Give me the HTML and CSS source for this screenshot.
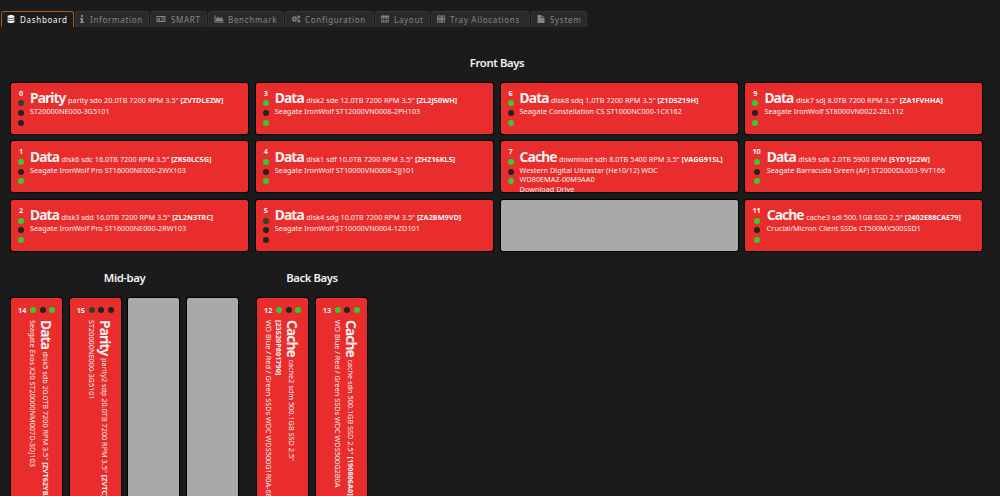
FILE: index.html
```
<!DOCTYPE html>
<html lang="en">
<head>
    <meta charset="UTF-8">
    <meta name="viewport" content="width=device-width, initial-scale=1.0">
    <title>Disk Location</title>
    <link rel="stylesheet" href="styles.css">
</head>
<body>

<nav class="tabs">
    <a class="tab tab-dashboard active"><svg viewBox="0 0 16 16"><path d="M1 3c0-4 14-4 14 0v1c0 3-14 3-14 0zM1 6c2 2 12 2 14 0v2c0 3-14 3-14 0zM1 10c2 2 12 2 14 0v3c0 4-14 4-14 0z"/></svg><span>Dashboard</span></a>
    <a class="tab tab-information"><svg viewBox="0 0 16 16"><path d="M6 0h4v4H6zM4 6h6v7h2v3H4v-3h2V9H4z"/></svg><span>Information</span></a>
    <a class="tab tab-smart"><svg class="wide" viewBox="0 0 18 16"><path fill-rule="evenodd" d="M0 2h18v12H0zM2 4v8h14V4z"/><path d="M3 11c0-3 5-3 5 0zM4 6h3v3H4zM10 5h5v2h-5zM10 8h5v1h-5zM10 10h5v1h-5z"/></svg><span>SMART</span></a>
    <a class="tab tab-benchmark"><svg class="wide" viewBox="0 0 18 16"><path d="M0 1h2v12h16v2H0zM3 12V8l4-5 3 4 4-3 4 8z"/></svg><span>Benchmark</span></a>
    <a class="tab tab-configuration"><svg class="wide" viewBox="0 0 18 16"><circle cx="6" cy="8" r="3.2" fill="none" stroke="currentColor" stroke-width="2.8"/><circle cx="6" cy="8" r="4.9" fill="none" stroke="currentColor" stroke-width="2" stroke-dasharray="2 1.85"/><circle cx="14.5" cy="4" r="2" fill="none" stroke="currentColor" stroke-width="2.4"/><circle cx="14.5" cy="12" r="2" fill="none" stroke="currentColor" stroke-width="2.4"/></svg><span>Configuration</span></a>
    <a class="tab tab-layout"><svg viewBox="0 0 16 16"><path fill-rule="evenodd" d="M0 1h16v14H0zM1 5v2h4V5zM6 5v2h4V5zM11 5v2h4V5zM1 8v2h4V8zM6 8v2h4V8zM11 8v2h4V8zM1 11v2h4v-2zM6 11v2h4v-2zM11 11v2h4v-2z"/></svg><span>Layout</span></a>
    <a class="tab tab-tray"><svg viewBox="0 0 16 16"><path fill-rule="evenodd" d="M0 1h16v4H0zM0 6h16v4H0zM0 11h16v4H0zM2 3v1h6V3zM2 8v1h6V8zM2 13v1h6v-1zM12 2v2h2V2zM12 7v2h2V7zM12 12v2h2v-2z"/></svg><span>Tray Allocations</span></a>
    <a class="tab tab-system"><svg viewBox="0 0 16 16"><path d="M1 0h7v6h7v10H1zM9 0l6 5H9z"/></svg><span>System</span></a>
</nav>

<section class="front">
    <h2>Front Bays</h2>
    <div class="grid">
        <div class="bay"><div class="leds"><b>0</b><i class="idle"></i><i></i><i></i></div><p><strong>Parity</strong> parity sdo 20.0TB 7200 RPM 3.5" <b>[ZVTDLEZW]</b><br>ST20000NE000-3G5101</p></div>
        <div class="bay"><div class="leds"><b>1</b><i class="on"></i><i></i><i class="on"></i></div><p><strong>Data</strong> disk6 sdc 16.0TB 7200 RPM 3.5" <b>[ZR50LC5G]</b><br>Seagate IronWolf Pro ST16000NE000-2WX103</p></div>
        <div class="bay"><div class="leds"><b>2</b><i class="on"></i><i></i><i class="on"></i></div><p><strong>Data</strong> disk3 sdd 16.0TB 7200 RPM 3.5" <b>[ZL2N3TRC]</b><br>Seagate IronWolf Pro ST16000NE000-2RW103</p></div>

        <div class="bay"><div class="leds"><b>3</b><i class="on"></i><i></i><i class="on"></i></div><p><strong>Data</strong> disk2 sde 12.0TB 7200 RPM 3.5" <b>[ZL2J50WH]</b><br>Seagate IronWolf ST12000VN0008-2PH103</p></div>
        <div class="bay"><div class="leds"><b>4</b><i class="on"></i><i></i><i class="on"></i></div><p><strong>Data</strong> disk1 sdf 10.0TB 7200 RPM 3.5" <b>[ZHZ16KL5]</b><br>Seagate IronWolf ST10000VN0008-2JJ101</p></div>
        <div class="bay"><div class="leds"><b>5</b><i class="idle"></i><i></i><i></i></div><p><strong>Data</strong> disk4 sdg 10.0TB 7200 RPM 3.5" <b>[ZA2BM9VD]</b><br>Seagate IronWolf ST10000VN0004-1ZD101</p></div>

        <div class="bay"><div class="leds"><b>6</b><i class="on"></i><i></i><i class="on"></i></div><p><strong>Data</strong> disk8 sdq 1.0TB 7200 RPM 3.5" <b>[Z1D5Z19H]</b><br>Seagate Constellation CS ST1000NC000-1CX162</p></div>
        <div class="bay"><div class="leds"><b>7</b><i class="on"></i><i></i><i class="on"></i></div><p><strong>Cache</strong> download sdh 8.0TB 5400 RPM 3.5" <b>[VAGG91SL]</b><br>Western Digital Ultrastar (He10/12) WDC<br>WD80EMAZ-00M9AA0<br>Download Drive</p></div>
        <div class="bay empty"></div>

        <div class="bay"><div class="leds"><b>9</b><i class="on"></i><i></i><i class="on"></i></div><p><strong>Data</strong> disk7 sdj 8.0TB 7200 RPM 3.5" <b>[ZA1FVHHA]</b><br>Seagate IronWolf ST8000VN0022-2EL112</p></div>
        <div class="bay"><div class="leds"><b>10</b><i class="on"></i><i></i><i class="on"></i></div><p><strong>Data</strong> disk9 sdk 2.0TB 5900 RPM <b>[5YD1J22W]</b><br>Seagate Barracuda Green (AF) ST2000DL003-9VT166</p></div>
        <div class="bay"><div class="leds"><b>11</b><i class="on"></i><i></i><i class="on"></i></div><p><strong>Cache</strong> cache3 sdl 500.1GB SSD 2.5" <b>[2402E88CAE79]</b><br>Crucial/Micron Client SSDs CT500MX500SSD1</p></div>
    </div>
</section>

<div class="lower">
    <section>
        <h2>Mid-bay</h2>
        <div class="row">
            <div class="bay tall"><div class="leds"><b>14</b><i class="on"></i><i></i><i class="on"></i></div><p><strong>Data</strong> disk5 sdb 20.0TB 7200 RPM 3.5" <b>[ZVT62YBA]</b><br>Seagate Exos X20 ST20000NM007D-3DJ103</p></div>
            <div class="bay tall"><div class="leds"><b>15</b><i class="idle"></i><i></i><i></i></div><p><strong>Parity</strong> parity2 sdp 20.0TB 7200 RPM 3.5" <b>[ZVTC]</b><br>ST20000NE000-3G5101</p></div>
            <div class="bay tall empty"></div>
            <div class="bay tall empty"></div>
        </div>
    </section>
    <section>
        <h2>Back Bays</h2>
        <div class="row">
            <div class="bay tall"><div class="leds"><b>12</b><i class="on"></i><i></i><i class="on"></i></div><p><strong>Cache</strong> cache2 sdm 500.1GB SSD 2.5"<br><b>[23520P801790]</b><br>WD Blue / Red / Green SSDs WDC WDS500G1R0A-68A</p></div>
            <div class="bay tall"><div class="leds"><b>13</b><i class="on"></i><i></i><i class="on"></i></div><p><strong>Cache</strong> cache sdn 500.1GB SSD 2.5" <b>[190806A0]</b><br>WD Blue / Red / Green SSDs WDC WDS500G2B0A</p></div>
        </div>
    </section>
</div>

</body>
</html>
```
FILE: styles.css
```
* {
    box-sizing: border-box;
}
body {
    margin: 0;
    height: 496px;
    overflow: hidden;
    background: #1c1b1b;
    color: #f2f2f2;
    font-family: "Noto Sans", sans-serif;
    font-size: 7.3px;
}
.tabs {
    display: flex;
    gap: 1px;
    padding: 11px 0 0 1px;
    height: 27px;
}
.tab {
    display: flex;
    align-items: center;
    gap: 4px;
    height: 16px;
    padding: 0 0 1px 5px;
    border: 1px solid #343434;
    border-bottom: none;
    border-radius: 3px 3px 0 0;
    background: #2b2a2a;
    color: #868686;
    font-size: 8px;
    letter-spacing: 0.7px;
    white-space: nowrap;
}
.tab svg {
    width: 8px;
    height: 8px;
    flex: none;
    fill: currentColor;
}
.tab svg.wide {
    width: 10px;
}
.tab.active {
    background: #1c1b1b;
    border-color: #a35a20;
    color: #f2f2f2;
}
.tab-dashboard { width: 73px; gap: 5px; }
.tab-information { width: 74px; padding-left: 2px; }
.tab-smart { width: 57px; gap: 5px; }
.tab-benchmark { width: 76px; }
.tab-configuration { width: 89px; }
.tab-layout { width: 55px; gap: 5px; }
.tab-tray { width: 99px; gap: 5px; }
.tab-system { width: 56px; gap: 5px; }
h2 {
    margin: 0;
    font-size: 11.3px;
    line-height: 16px;
    font-weight: 600;
    letter-spacing: -0.4px;
    text-align: center;
}
.front {
    padding: 28px 0 0 10px;
    width: 984px;
}
.grid {
    display: grid;
    grid-template-columns: repeat(4, 239px);
    grid-template-rows: repeat(3, 53px);
    grid-auto-flow: column;
    gap: 5.6px 5.8px;
    margin-top: 10.8px;
}
.bay {
    display: flex;
    padding: 7px 0 0 7px;
    border: 1px solid #000;
    border-radius: 3px;
    background: #e92d2d;
    box-shadow: 0 0 1px #000;
    overflow: hidden;
    white-space: nowrap;
}
.bay.empty {
    background: #a9a9a9;
}
.leds {
    display: flex;
    flex-direction: column;
    align-items: center;
    gap: 3.6px;
    min-width: 6px;
    line-height: 7px;
}
.leds i {
    width: 6px;
    height: 6px;
    flex: none;
    border-radius: 50%;
    background: #232323;
}
.leds .on {
    background: #32cd32;
}
.leds .idle {
    background: #2c4125;
}
.bay p {
    margin: -1.5px 0 0 6px;
    line-height: 9.6px;
}
.bay strong {
    font-size: 13.8px;
    line-height: 19px;
    font-weight: 700;
    letter-spacing: -0.9px;
    margin-right: 0.6px;
}
.lower {
    display: flex;
    gap: 17px;
    padding: 18.2px 0 0 10px;
}
.row {
    display: flex;
    gap: 5.7px;
    margin-top: 11px;
}
.bay.tall {
    flex-direction: column;
    width: 53px;
    height: 240px;
    padding: 8px 0 0 7px;
}
.tall .leds {
    flex-direction: row;
    line-height: 8px;
}
.tall p {
    margin: 6px 6px 0 0;
    align-self: flex-end;
    writing-mode: vertical-rl;
}
.tall strong {
    margin: 0 0 0.6px;
}
```
